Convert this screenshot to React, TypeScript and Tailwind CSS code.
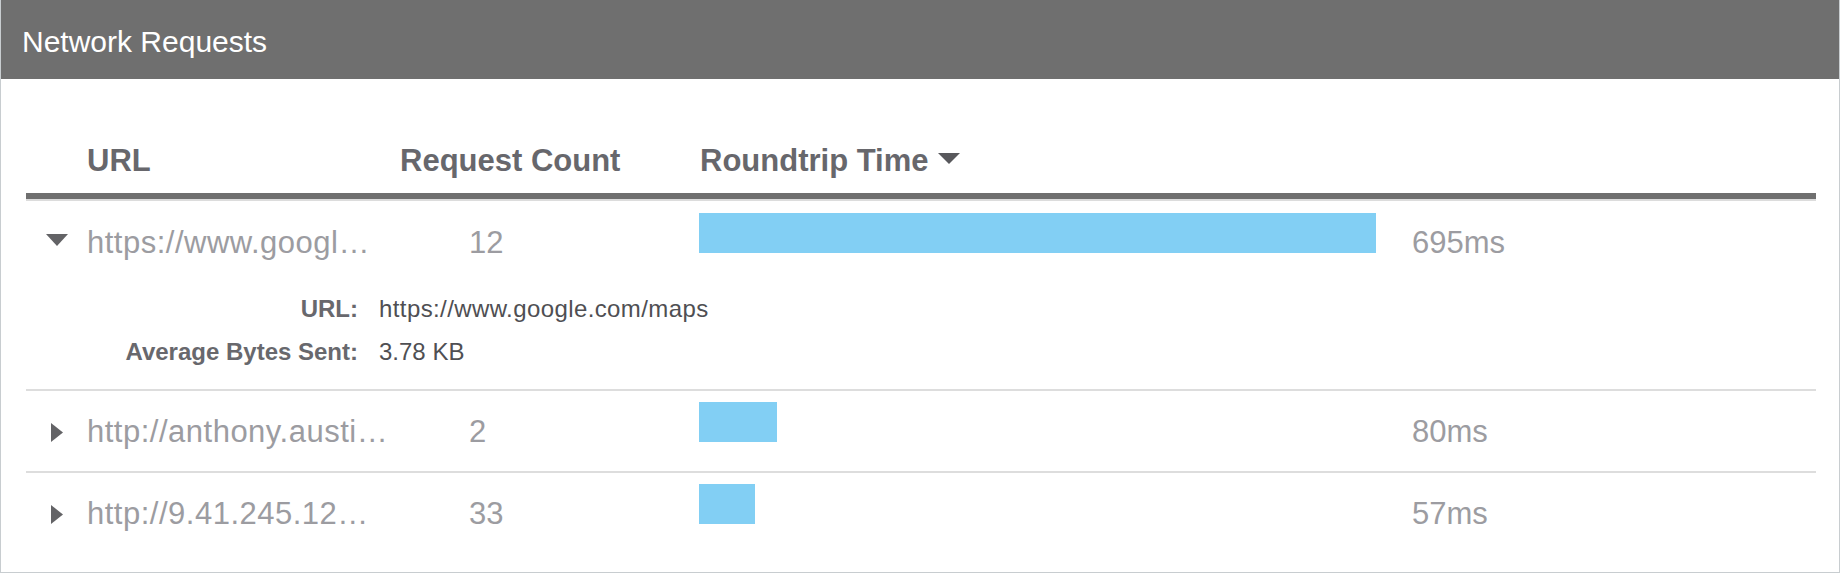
import React from "react";

type Row = { url: string; count: number; ms: number; expanded: boolean };

const rows: Row[] = [
  { url: "https://www.googl…", count: 12, ms: 695, expanded: true },
  { url: "http://anthony.austi…", count: 2, ms: 80, expanded: false },
  { url: "http://9.41.245.12…", count: 33, ms: 57, expanded: false },
];

const PX_PER_MS = 677 / 695;

function RightTriangle() {
  return (
    <svg width="12" height="19" viewBox="0 0 12 19" className="block">
      <polygon points="0,0 12,9.5 0,19" fill="#636366" />
    </svg>
  );
}

function DownTriangle() {
  return (
    <svg width="22" height="12" viewBox="0 0 22 12" className="block">
      <polygon points="0,0 22,0 11,12" fill="#636366" />
    </svg>
  );
}

function RequestRow({ row, first, last }: { row: Row; first: boolean; last: boolean }) {
  return (
    <div
      className={`${first ? "pt-[1px]" : ""} ${last ? "" : "border-b-2 border-[#dddddd]"}`}
    >
      <div className="flex items-start h-[80px] text-[31px] leading-[31px] text-[#9c9ca1]">
        <div className="w-[61px] flex justify-center pt-[32px]">
          {row.expanded ? <DownTriangle /> : <RightTriangle />}
        </div>
        <div className="w-[313px] mt-[25px] whitespace-nowrap tracking-[0.5px]">{row.url}</div>
        <div className="w-[299px] pl-[69px] mt-[25px]">{row.count}</div>
        <div className="w-[713px] pt-[11px]">
          <div className="h-[40px] bg-[#82cff4]" style={{ width: Math.round(row.ms * PX_PER_MS) }} />
        </div>
        <div className="mt-[25px]">{row.ms}ms</div>
      </div>
      {row.expanded && (
        <div className="pt-[5px] pb-[16px] text-[24px] leading-[43px]">
          <div className="flex">
            <div className="w-[332px] text-right font-bold text-[#68686d]">URL:</div>
            <div className="pl-[21px] text-[#4f4f53] tracking-[0.4px]">https://www.google.com/maps</div>
          </div>
          <div className="flex">
            <div className="w-[332px] text-right font-bold text-[#68686d]">Average Bytes Sent:</div>
            <div className="pl-[21px] text-[#4f4f53]">3.78 KB</div>
          </div>
        </div>
      )}
    </div>
  );
}

export default function App() {
  return (
    <div className="w-[1840px] h-[574px] bg-white font-['Liberation_Sans',Arial,sans-serif]">
      <div className="h-[573px] border-x border-b border-[#c8cdd0] flex flex-col">
        <div className="h-[79px] bg-[#6f6f6f] pl-[21px] pt-[27px] text-white text-[30px] leading-[30px]">
          Network Requests
        </div>
        <div className="pl-[25px] pr-[23px] flex flex-col">
          <div className="flex pt-[66px] pb-[17px] text-[31px] leading-[31px] font-bold text-[#67676c]">
            <div className="w-[374px] pl-[61px]">URL</div>
            <div className="w-[300px]">Request Count</div>
            <div className="flex items-start">
              <span>Roundtrip Time</span>
              <svg width="22" height="11" viewBox="0 0 22 11" className="mt-[8px] ml-[10px]">
                <polygon points="0,0 22,0 11,11" fill="#58585c" />
              </svg>
            </div>
          </div>
          <div className="h-[6px] bg-[#6f6f6f]" />
          <div className="h-[2px] bg-[#dcdcdc]" />
          {rows.map((r, i) => (
            <RequestRow key={i} row={r} first={i === 0} last={i === rows.length - 1} />
          ))}
        </div>
      </div>
    </div>
  );
}
